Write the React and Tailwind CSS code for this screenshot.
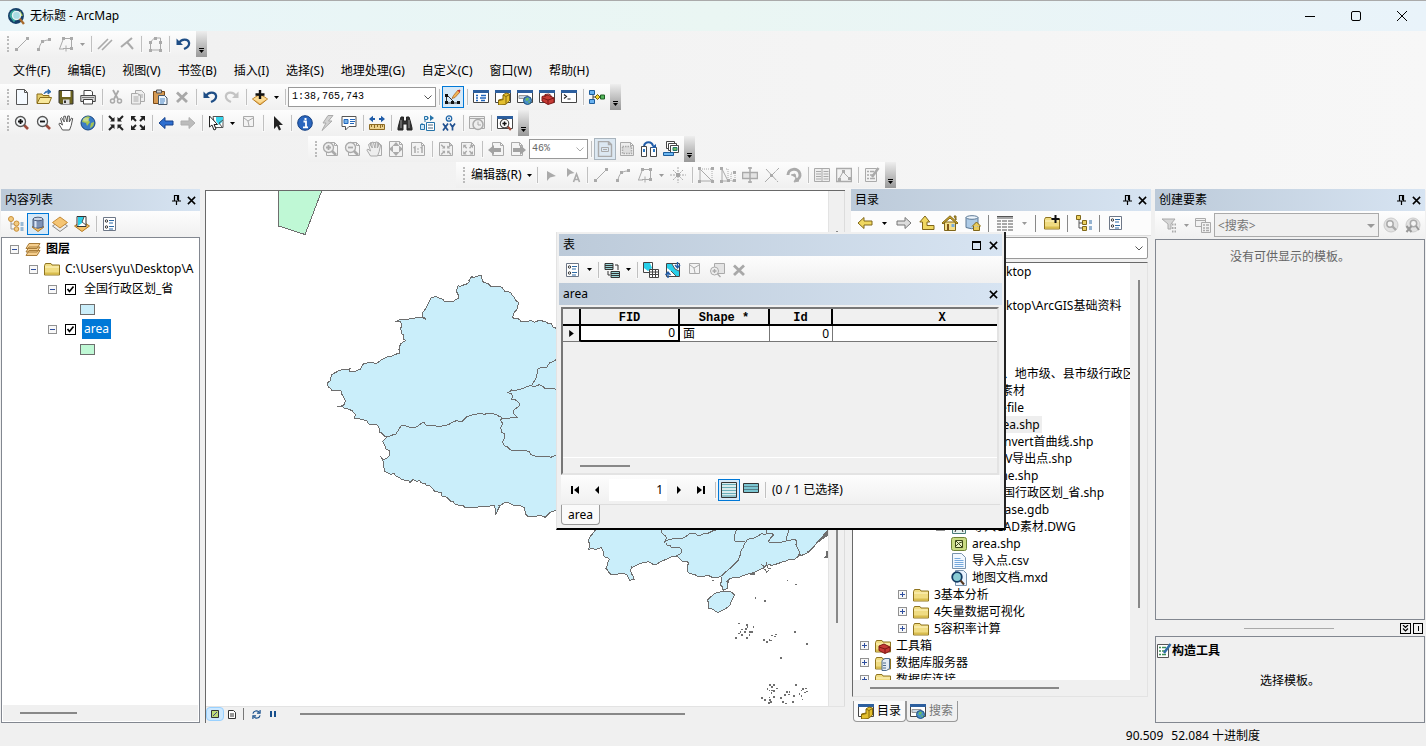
import React from "react";

const G = "#aaaaaa";
const N = "#1f4e86";
const D = "#444444";

const page = (c, f = "#f4f4f4") => <path d="M2.5 1.5h8l3 3v10h-11zM10.5 1.5v3h3" fill={f} stroke={c} />;
const lens = (c, f, handle, plus) => (
  <>
    <path d="M9.5 9.5l4.500 4.500" stroke={handle} strokeWidth="2.600" />
    <circle cx="6.500" cy="6.500" r="5" fill={f} stroke={c} strokeWidth="1.300" />
    <path d={plus ? "M4 6.500h5M6.500 4v5" : "M4 6.500h5"} stroke={c === G ? G : "#111"} strokeWidth="1.800" />
  </>
);
const win = (
  <>
    <path d="M.5 1.500h15v12h-15z" fill="#fff" stroke={D} />
    <path d="M0 1h16v3H0z" fill="#2d5f9e" />
  </>
);
const folder = (
  <>
    <path d="M.5 14V4.500l1-2h5.500l1 1.500h7.500V14z" fill="#f0dc82" stroke="#8f7420" />
    <path d="M1 6h14" stroke="#fff5c4" />
    <path d="M1 11.500h14v2H1z" fill="#d9bd4e" />
  </>
);
const grayHand = (c, f) => (
  <path d="M4.500 15L.8 9l1-1 2.700 2L2.500 3.500l1-1L6.300 7 5.600 1.500 7.200 1 9 7l.7-6 1.600 0v6L13.500 3l1.200.6-1.500 7-1.700 4.400z" fill={f} stroke={c} strokeLinejoin="round" />
);
const undo = (c, flip) => (
  <g transform={flip ? "translate(16 0) scale(-1 1)" : undefined}>
    <path d="M4 7c2.500-4.500 9-4.500 10-.5.600 3-1.500 5-5 6.500" fill="none" stroke={c} strokeWidth="2.200" />
    <path d="M1.500 2.500v6.500h6.500z" fill={c} />
  </g>
);
const arrowH = (c, e, flip) => (
  <g transform={flip ? "translate(16 0) scale(-1 1)" : undefined}>
    <path d="M1 8l6-5.500v3.500h8v4H7v3.500z" fill={c} stroke={e} />
  </g>
);
const inward = (c) => (
  <>
    <path d="M1 1l4 4M15 1l-4 4M1 15l4-4M15 15l-4-4" stroke={c} strokeWidth="2" />
    <path d="M6.500 2v4.500H2zM9.500 2v4.500H14zM6.500 14V9.500H2zM9.500 14V9.500H14z" fill={c} />
  </>
);
const outward = (c) => (
  <>
    <path d="M6 6L2.500 2.500M10 6l3.500-3.500M6 10l-3.500 3.500M10 10l3.500 3.500" stroke={c} strokeWidth="2" />
    <path d="M1 1h5L1 6zM15 1h-5l5 5zM1 15h5l-5-5zM15 15h-5l5-5z" fill={c} />
  </>
);
const box = (x, y, c = G, s = 3) => <rect x={x} y={y} width={s} height={s} fill={c} />;

const ICONS = {
  线段: <><path d="M3 13L13 3" stroke={G} />{box(1, 12)}{box(12, 1)}</>,
  弧段: <><path d="M3 13C4 7 7 4 13 4" stroke={G} fill="none" />{box(1, 12)}{box(5, 4)}{box(12, 2)}</>,
  草图: <><path d="M1.500 13L5.500 2.500h8v10h-3" stroke={G} fill="none" /><path d="M1 13h5M8 9.500v6M5 12.500h6" stroke={G} />{box(4, 1)}{box(12, 1)}{box(12, 11)}</>,
  平行: <path d="M1 13L11 3M5 14L15 4" stroke={G} strokeWidth="1.600" />,
  垂直: <path d="M2 11L13 2M8 6l6 7" stroke={G} strokeWidth="2" />,
  完成草图: <><path d="M3.500 14V6l4-4h6v12z" stroke={G} fill="none" />{box(2, 5)}{box(12, 5)}{box(2, 13)}{box(12, 13)}{box(7, 1)}</>,
  撤销: undo(N),
  恢复: undo("#c4c4c4", true),
  新建: <path d="M2.500.5h8l3 3v12h-11zM10.500.5v3h3" fill="#f5faff" stroke="#555" />,
  打开: <><path d="M1 14V5h5l1 1.500h6V14z" fill="#e6cf6c" stroke="#8a6d1a" /><path d="M1 14.500L4 8.500h11.500L13 14.500z" fill="#f7e89c" stroke="#8a6d1a" /><path d="M8 5c1-3 3-3 5-2.500M12 .5l3 2.200-3 2.300z" fill="#2d6cae" stroke="#2d6cae" /></>,
  保存: <><path d="M1 1.500h14v13.500H2.500L1 13.500z" fill="#6d641f" stroke="#333" /><path d="M4 2h8.500v6H4z" fill="#fff" /><path d="M5 10.500h6.500V15H5z" fill="#ddd" /><path d="M6 11.500h2V14H6z" fill="#333" /></>,
  打印: <><path d="M4 6V1.500h7l1.500 1.500V6" fill="#fff" stroke="#444" /><path d="M.8 6.500h14.500v6H.8z" fill="#d8d8d8" stroke="#444" /><path d="M3.500 10.500h9v4.500h-9z" fill="#fff" stroke="#444" /><path d="M2 8.500h12" stroke="#777" /></>,
  剪切: <><path d="M5 1l5 9M10.500 1.500L6 10" stroke={G} strokeWidth="1.800" /><circle cx="4.500" cy="12" r="2" fill="none" stroke={G} strokeWidth="1.500" /><circle cx="11.500" cy="12" r="2" fill="none" stroke={G} strokeWidth="1.500" /></>,
  复制: <><path d="M5.500 1.500h6l3 3v8h-9z" fill="#eee" stroke={G} /><path d="M1.500 4.500h6l3 2v8.500h-9z" fill="#eee" stroke={G} /><path d="M3.500 8h5M3.500 10h5M3.500 12h5M8 6h5M11 8h2" stroke={G} /></>,
  粘贴: <><path d="M1.500 2.500h11v12h-11z" fill="#d69a52" stroke="#7a4a18" /><path d="M4.500 1h5v3h-5z" fill="#ccc" stroke="#555" /><path d="M6.500 6.500h6l2.500 2.500v6.500H6.500z" fill="#eef5fc" stroke="#456" /><path d="M8 10h5M8 12h5M8 14h4" stroke="#4a86c5" /></>,
  删除: <path d="M3 3.500l10 9.500M13 3.500L3 13" stroke="#a8a8a8" strokeWidth="2.800" />,
  添加数据: <><path d="M8 5L15.500 10 8 16 .5 10z" fill="#f0b95c" stroke="#b57a22" /><path d="M1 10l7-4 7 4-7 4z" fill="#fbdb95" /><path d="M8 1v9M3.500 5.500h9" stroke="#111" strokeWidth="2.400" /></>,
  编辑器工具条: <><path d="M1.500 6v8M2 14h12M2 6l6 6" stroke="#333" fill="none" />{box(0, 12, "#111", 3)}{box(6, 12, "#111", 3)}{box(12, 12, "#111", 3)}{box(0, 5, "#111", 3)}<path d="M7 9.500l1.500-3L13 1l2 2-5 5.500z" fill="#f2b554" stroke="#a15c20" strokeWidth=".7" /><path d="M12.500 1.500l2 2 1-2-1-1z" fill="#c43636" /></>,
  内容列表: <>{win}<path d="M3 6.500h2M3 9h2M3 11.500h2M8 6.500h5M7 9h6M8 11.500h4" stroke="#2266bb" strokeWidth="1.300" /></>,
  目录窗口: <>{win}<path d="M8 6l3-2 3.500 1v7l-4 3.500L3.500 16v-5l4.500-1z" fill="#e3bf2e" stroke="#87690a" /><path d="M11 7.500l3.500-2M11 7.500v7.500M4 11.500l4.500-1M8 6l3 1.500" stroke="#87690a" /></>,
  搜索窗口: <>{win}<path d="M2 6.500h9v3H2z" fill="#ccd8e2" stroke="#999" /><circle cx="10.500" cy="11.500" r="4" fill="#4a90c9" stroke="#1d4f80" /><path d="M8.500 10q2-2 3.500-.5l-1 2-2 .5zM11 12l2.500 1-1.500 1.500z" fill="#6cbd59" /></>,
  工具箱窗口: <>{win}<path d="M3 7.500L9 6l6 3v4.500L9 15.500 3 12z" fill="#c53a35" stroke="#7d1715" /><path d="M6 8V5.500l4-.5 2 1.500V8M3.500 9L9 11l6-2M9 11v4" fill="none" stroke="#7d1715" /></>,
  Python窗口: <>{win}<path d="M3 5.500l2.500 2L3 9.500M6.500 10h3" fill="none" stroke="#222" strokeWidth="1.200" /></>,
  模型构建器: <><path d="M4 4v9M4 8h8" stroke="#444" fill="none" /><path d="M.5 1.500h5v4h-5zM.5 10.500h5v4h-5z" fill="#69b2f0" stroke="#1d5d9c" /><path d="M6 8l2.500-2.500L11 8l-2.500 2.500z" fill="#f5d32a" stroke="#6d5a0d" /><path d="M11.500 6h4v4h-4z" fill="#53b65a" stroke="#205f25" /></>,
  放大: lens("#555", "#f3f6f8", "#9c4b3c", true),
  缩小: lens("#555", "#f3f6f8", "#9c4b3c", false),
  平移: grayHand("#555", "#fff"),
  全图: <><circle cx="8" cy="8" r="7" fill="#3a7cc6" stroke="#17457f" /><path d="M3 4q4-4 7-2l-2 3 2 2-3 4-1-3-4-1zM11 8l3-1q0 5-4 6z" fill="#a6c552" /><ellipse cx="6" cy="4.500" rx="3" ry="2" fill="#fff" opacity=".35" /></>,
  固定比例放大: inward("#222"),
  固定比例缩小: outward("#222"),
  返回: arrowH("#2e6fd0", "#16428c"),
  前进: arrowH("#bcbcbc", "#b0b0b0", true),
  选择要素: <><path d="M5 1.500h10v11H7z" fill="#fff" stroke="#555" /><path d="M8 2h7v4l-4 4-3-4z" fill="#35d4ec" /><path d="M15 5l-4 3 3 4" stroke="#555" fill="none" /><path d="M1.500 1v11l2.500-2 2 5 2-1-2-4.500h3.500z" fill="#fff" stroke="#222" /></>,
  清除选择: <><path d="M2.500 1.500h10v10h-10z" fill="#f3f3f3" stroke={G} /><path d="M3 3l4 3 1 5M7 6l5-3" stroke={G} fill="none" /></>,
  选择元素: <path d="M5 1v13l3-3 2 4.500 2-1-2-4.500h4z" fill="#222" />,
  识别: <><circle cx="8" cy="8" r="7.300" fill="#2a66be" stroke="#143f80" /><path d="M6.500 6.500H9v5.500M6 12.300h5" stroke="#fff" strokeWidth="1.800" fill="none" /><path d="M7.500 3h2v2h-2z" fill="#fff" /></>,
  超链接: <path d="M9 .5L4 8h3l-4 7.500L13 6H9.500L14 .5z" fill="#d2d2d2" stroke={G} />,
  HTML弹出: <><path d="M1 1.500h14v10H8L4.500 15v-3.500H1z" fill="#fff" stroke="#555" /><path d="M3 4.500h4v4H3z" fill="#78b4e8" stroke="#2266bb" /><path d="M9 4.500h5M9 6.500h5M9 8.500h4" stroke="#2266bb" /></>,
  测量: <><path d="M.5 9.500h15v5H.5z" fill="#ecd18c" stroke="#8d6a23" /><path d="M2.500 10v2M5.500 10v3M8.500 10v2M11.500 10v3M13.500 10v2" stroke="#8d6a23" /><path d="M0 4l4-3.200v2.200h2v2H4v2.200zM16 4l-4-3.200v2.200h-2v2h2v2.200z" fill="#205ca8" /></>,
  查找: <><path d="M4 2h2.500v4h3V2H12l1.500 5 1.500 6v2h-5V9H6v6H1v-2l1.500-6z" fill="#333" stroke="#222" /><path d="M4 5v8M12 5v8" stroke="#999" /></>,
  查找路径: <><path d="M7.500 7.500h8v8h-8z" fill="#fff" stroke="#2673a8" /><path d="M9 10h5M9 13h5" stroke="#8a9aa8" strokeWidth="1.500" /><path d="M3 10V8M8 3h4M6 5v2" stroke="#2673a8" strokeDasharray="2 1" /><path d="M11 0l4 3-4 3z" fill="#2673a8" /><path d="M1.500 9.500h4v5h-4zM5.500 1.500h3v3h-3z" fill="#cfe6f7" stroke="#2673a8" /></>,
  转到XY: <><circle cx="8" cy="3.500" r="2.700" fill="#fff" stroke="#2066a8" strokeWidth="1.300" /><circle cx="8" cy="3.500" r="1" fill="#2066a8" /><path d="M2 8.500l5 7M7 8.500l-5 7M9 8.500l2.500 3.500L14 8.500M11.500 12v3.500" stroke="#205090" strokeWidth="1.700" fill="none" /></>,
  时间滑块: <><path d="M.5 1.500h15v12H.5zM.5 3.500h15" fill="#eee" stroke={G} /><circle cx="9" cy="9.500" r="5" fill="#eee" stroke={G} strokeWidth="1.500" /><path d="M9 6.500V10h3" stroke={G} fill="none" /></>,
  查看器: <>{win}<g transform="translate(2 3) scale(.85)">{lens("#444", "#fff", "#9c4b3c", true)}</g></>,
  页面放大: <><g transform="translate(2 0)">{page(G)}</g>{lens(G, "#eee", G, true)}</>,
  页面缩小: <><g transform="translate(2 0)">{page(G)}</g>{lens(G, "#eee", G, false)}</>,
  页面平移: <><g transform="translate(2 0)">{page(G)}</g>{grayHand(G, "#eee")}</>,
  页面全图: <><path d="M1.500.5h10l3 3v12h-13zM11.500.5v3h3" fill="#f2f2f2" stroke={G} /><path d="M8 1l3.500 4h-7zM8 15l3.500-4h-7zM1 8l4-3.500v7zM15 8l-4-3.500v7z" fill={G} /></>,
  实际大小: <><path d="M1.500 1.500h10l3 3v10h-13zM11.500 1.500v3h3" fill="#f2f2f2" stroke={G} /><path d="M3.500 7L5 6v6M10.500 7L12 6v6" stroke={G} fill="none" strokeWidth="1.500" /><path d="M7 7.500h2v1H7zM7 10.500h2v1H7z" fill={G} /></>,
  页面缩入: <><path d="M1.500 1.500h10l3 3v10h-13zM11.500 1.500v3h3" fill="#f2f2f2" stroke={G} /><g transform="translate(2.500 3) scale(.7)">{inward(G)}</g></>,
  页面缩出: <><path d="M1.500 1.500h10l3 3v10h-13zM11.500 1.500v3h3" fill="#f2f2f2" stroke={G} /><g transform="translate(2.500 3) scale(.7)">{outward(G)}</g></>,
  上一页面: <><g transform="translate(2 0)">{page(G)}</g><path d="M0 9l6-5v3h7v4H6v3z" fill="#a2a2a2" /></>,
  下一页面: <><g transform="translate(-1 0)">{page(G)}</g><path d="M16 9l-6-5v3H3v4h7v3z" fill="#a2a2a2" /></>,
  切换草稿: <><path d="M1.500.5h10l3 3v12h-13zM11.500.5v3h3" fill="none" stroke={G} strokeWidth="1.400" /><path d="M4.500 6.500h7v4h-7zM6 8.500h4" fill="none" stroke={G} /></>,
  焦点数据框: <><path d="M1.500 1.500h10l3 3v10h-13zM11.500 1.500v3h3" fill="#eee" stroke={G} /><path d="M3.500 5.500h9v7h-9z" stroke={G} strokeWidth="1.500" strokeDasharray="1.500 1" fill="#ddd" /></>,
  更改布局: <><path d="M.5 5.500h5v10h-5zM9.500 6.500h6v9h-6z" fill="#fff" stroke="#444" /><path d="M2 8h2v3H2zM12 8h2v3h-2z" fill="#2d7ac2" /><path d="M3 5C4 0 11 0 12 5" stroke="#205ca8" strokeWidth="2" fill="none" /><path d="M15 3v4H9.500z" fill="#205ca8" /></>,
  数据驱动: <><path d="M3.500.5h8v7h-8z" fill="#fff" stroke="#444" /><path d="M5.500 2.500h8v7h-8z" fill="#fff" stroke="#444" /><path d="M7.500 4.500h8v7h-8z" fill="#fff" stroke="#444" /><path d="M10 6.500h4v3h-4z" fill="#71bd62" stroke="#276" /><path d="M.5 11.500h10v3H.5z" fill="#6db7f0" stroke="#1d5d9c" /></>,
  编辑工具: <path d="M4 4v10l3-3.500 6-1.500z" fill={G} />,
  注记编辑: <><path d="M2 1v9l3-3 4.500-1z" fill={G} /><path d="M8.500 15l3-8 3 8M9.500 12.500h4" stroke={G} fill="none" strokeWidth="1.600" /></>,
  点: <><path d="M8 0v16M0 8h16M3 3l10 10M13 3L3 13" stroke={G} strokeDasharray="2 1" />{box(6, 6, "#a5a5a5", 4)}</>,
  编辑折点: <><path d="M2 2v12h12L2 2" stroke={G} fill="none" /><path d="M2 2h12v12" stroke={G} strokeDasharray="1 1" />{box(0, 0)}{box(0, 13)}{box(13, 0)}{box(13, 13)}</>,
  整形: <><path d="M2 2v12h6z" stroke={G} fill="none" /><path d="M6 2h2v12M11 6h4v8h-4z" stroke={G} strokeDasharray="1 1" />{box(0, 0)}{box(0, 13)}{box(7, 12)}{box(13, 4)}{box(13, 12)}</>,
  裁剪面: <><path d="M.5 5.500h15v6H.5z" stroke={G} fill="#e4e4e4" strokeWidth="1.500" /><path d="M8 0v16M6 1h4M6 15h4" stroke={G} strokeWidth="1.500" /></>,
  分割: <><path d="M1 15L15 1M2 2l12 13" stroke={G} strokeDasharray="7 1" />{box(6, 7)}</>,
  旋转: <><path d="M2 8a6 5.500 0 1 1 8 5" stroke={G} strokeWidth="3" fill="none" /><path d="M5 8l4-1 1 4M10 11l-2 4 5-1z" fill={G} stroke={G} /></>,
  属性: <><path d="M.5 1.500h15v13H.5zM8 2v12M2 4.500h5M2 7h5M2 9.500h5M2 12h5M9.500 4.500h5M9.500 7h5M9.500 9.500h5M9.500 12h5" stroke={G} fill="#eee" /></>,
  草图属性: <><path d="M.5 1.500h15v13H.5z" stroke={G} fill="#f3f3f3" strokeWidth="1.500" /><path d="M3 12l4-7 6 6" stroke={G} fill="none" />{box(2, 11)}{box(6, 3)}{box(12, 10)}</>,
  创建要素: <><path d="M1.500 1.500h11v13h-11z" stroke={G} fill="#f3f3f3" /><path d="M3 4.500h2M3 8h2M3 11.500h2M6 4.500h4M6 8h3M6 11.500h5" stroke={G} strokeWidth="1.500" /><path d="M8 10l6.500-9" stroke={G} strokeWidth="2.500" /></>,
  按绘制顺序: <><path d="M3 5v8h8M3 8h5" stroke="#999" fill="none" /><circle cx="3" cy="3" r="2.500" fill="#f2ca80" stroke="#c98f38" /><circle cx="8.500" cy="7.500" r="2.500" fill="#f2ca80" stroke="#c98f38" /><circle cx="8.500" cy="13" r="2.300" fill="#f2ca80" stroke="#c98f38" /><path d="M12.500 7h3M12.500 9h3M12.500 12h3M12.500 14h3" stroke="#3c7fb5" /></>,
  按源: <><path d="M4 10h8l2 1-6 4.500L2 11z" fill="#f4c168" stroke="#b57a22" /><path d="M3 3v8q5 2.500 10 0V3z" fill="#7d92b5" stroke="#50607e" /><path d="M5.500 4v7.500" stroke="#dbe6f6" strokeWidth="2" /><ellipse cx="8" cy="3" rx="5" ry="1.800" fill="#cad5e6" stroke="#50607e" /></>,
  按可见性: <><path d="M8 5l7.500 5L8 15.500.5 10z" fill="#eee" stroke="#888" /><path d="M8 1l7.500 5.500L8 12 .5 6.500z" fill="#f5c574" stroke="#c58a36" /></>,
  按选择: <><path d="M8 5l7.500 5L8 15.500.5 10z" fill="#f4c168" stroke="#b57a22" /><path d="M3 .5h9v10H3z" fill="#fff" stroke="#333" /><path d="M4 1h6l-2 6-4 3z" fill="#28cfe9" /><path d="M10 1L8 6l4 3" stroke="#555" fill="none" /></>,
  选项: <><path d="M1.500 1.500h12v13h-12z" fill="#fff" stroke="#6d7787" /><path d="M7 4.500h5M7 7h4M7 10.500h5M7 13h4" stroke="#2e6aa5" /><circle cx="4.500" cy="5" r="1.200" fill="none" stroke="#333" /><circle cx="4.500" cy="11" r="1.200" fill="none" stroke="#333" /></>,
  图层组: <path d="M4 9.500h11l-3 5H1zM4 6h11l-3 5H1zM4 2.500h11l-3 5H1z" fill="#f5ce8d" stroke="#a87c39" />,
  文件夹: folder,
  上一级: <path d="M6 1L.8 7h2.700v7.500H15v-4H8V7h2.700z" fill="#f0d860" stroke="#806618" />,
  后退: arrowH("#f0d860", "#806618"),
  向前: arrowH("#ddd", "#777", true),
  主目录: <><path d="M2.500 7v8.500h11V7z" fill="#f4df8c" stroke="#806618" /><path d="M0 8L8 .800 16 8l-1 1-7-6-7 6zM12 1h2v4z" fill="#cfa92c" stroke="#806618" /><path d="M5 9h2v6H5z" fill="#80571a" /><path d="M9.500 9h3v3h-3z" fill="#77aadd" /></>,
  默认库: <><path d="M1 2.500v10q5.500 2.500 12 0V2.500z" fill="#aecbe6" stroke="#5c7894" /><ellipse cx="7" cy="2.500" rx="6" ry="1.800" fill="#edf5fc" stroke="#5c7894" /><path d="M8.500 11v4.500h6V11M7 11.500L11.500 7l4.500 4.500" fill="#eacb58" stroke="#806618" /></>,
  视图: <path d="M0 1.500h16M0 3h16M0 6h4M5 6h5M11 6h5M0 9h4M5 9h5M11 9h5M0 12h4M5 12h5M11 12h5M0 15h4M5 15h5M11 15h5" stroke="#555" strokeWidth="1.200" />,
  连接文件夹: <>{folder}<path d="M11.500 0v8M7.500 4h8" stroke="#111" strokeWidth="2" /></>,
  目录树: <><path d="M3 3v10h6M3 8h6" stroke="#555" fill="none" /><path d="M.5.500h4v4h-4zM6.500 5.500h4v4h-4zM6.500 11.500h4v4h-4z" fill="#ecd060" stroke="#80691a" /><path d="M13 6h3M13 8h3M13 12h3M13 14h3" stroke="#2e6aa5" /></>,
  关联表: <><path d="M1 1.500h8v6H1zM7 9.500h8.500v6H7z" fill="#9bd6d8" stroke="#333" /><path d="M1 3.500h8M1 5.500h8M7 11.500h8M7 13.500h8M11 3h3v5M4 9v4h2" stroke="#333" fill="none" /></>,
  按属性选择: <><path d="M.5.500h9v10h-9z" fill="#fff" stroke="#444" /><path d="M1 1h6l2 5-4 3-4-3z" fill="#28cfe9" /><path d="M6.500 7.500h9v8h-9zM6.500 10h9M6.500 12.500h9M9.500 8v7M12.500 8v7" fill="#fff" stroke="#444" /></>,
  切换选择: <><path d="M1.500 1.500h13v13h-13z" fill="#fff" stroke="#444" /><path d="M2 2h5l3 5 4 2v5h-3L6 9 2 6z" fill="#28cfe9" /><path d="M7 2l3 5 4 2M6 9l5 5" stroke="#555" /><path d="M3 16v-5M.5 13L3 10l2.500 3M12.500 0v5M10 3l2.500 3L15 3" stroke="#205ca8" strokeWidth="1.400" fill="none" /></>,
  缩放至所选: <><path d="M5.500 1.500h10v10h-10z" fill="#e4e4e4" stroke={G} /><circle cx="5.500" cy="9" r="4" fill="#eee" stroke={G} /><path d="M3.500 9h4M5.500 7v4M8.500 12l3 3" stroke={G} strokeWidth="1.400" /></>,
  筛选: <><path d="M0 2h13L9 7v5H6V7z" fill="#d6d6d6" stroke={G} /><path d="M10 7.500h5M10 11h5M10 14.500h5" stroke={G} strokeWidth="2" strokeDasharray="1.500 1" /></>,
  组织模板: <><path d="M.5 1.500h10v8H.5zM.5 3.500h10" fill="#f2f2f2" stroke={G} /><path d="M6.500 5.500h9v10h-9z" fill="#f2f2f2" stroke={G} /><path d="M8 8h2M8 11h2M8 13.500h2M11 8h3M11 11h3M11 13.500h3" stroke={G} strokeWidth="1.500" /></>,
  搜索: <><circle cx="8" cy="8" r="7" fill="#e2e2e2" stroke="#ccc" /><circle cx="7" cy="7" r="3.200" fill="#f5f5f5" stroke={G} strokeWidth="1.500" /><path d="M9.500 9.500l3.500 3.500" stroke={G} strokeWidth="2.400" /></>,
  清除: <><circle cx="8" cy="8" r="7" fill="#e2e2e2" stroke="#ccc" /><circle cx="8.500" cy="6.500" r="3.200" fill="#f5f5f5" stroke={G} strokeWidth="1.500" /><path d="M11 9l3 4M1.500 9l5 6M6.500 9l-5 6" stroke="#999" strokeWidth="2" /></>,
  所有记录: <><path d="M.5.5h15v15H.5z" fill="#fff" stroke="#333" /><path d="M1 2.500h14M1 5.500h14M1 8.500h14M1 11.500h14M1 14h14" stroke="#69aeb9" strokeWidth="1.500" /></>,
  所选记录: <><path d="M.5 1.500h15v9H.5z" fill="#7cc6d2" stroke="#333" /><path d="M1 4.500h14M1 7.500h14" stroke="#55808a" /></>,
  工具箱: <>{folder}<path d="M4 8l5-2 6 3v4l-5 2.500L4 12.500z" fill="#c53a35" stroke="#7d1715" /><path d="M4 9l6 2 5-2M10 11v4" stroke="#7d1715" fill="none" /></>,
  服务器: <>{folder}<path d="M7 5.500l3-2h4.500v10l-3 2H7z" fill="#e3ebf3" stroke="#4e6c8c" /><path d="M8 8h3M8 10.500h3M8 13h3" stroke="#4e6c8c" /></>,
  要素类: <><rect x=".5" y="1.500" width="15" height="13" rx="2" fill="#cbdc84" stroke="#6f8434" /><path d="M4.500 4.500h7v7h-7zM5 5l6 6M5 10l3-3 3-1" fill="#eef4c6" stroke="#3b4717" /></>,
  文本: <><path d="M1.500.5h9l4 4v11h-13z" fill="#f2f8ff" stroke="#7993ad" /><path d="M3.500 5.500h6M3.500 7.500h9M3.500 9.500h9M3.500 11.500h9M3.500 13.500h9" stroke="#76a9dc" /></>,
  地图文档: <><path d="M4.500.5h8l3 3v12h-11z" fill="#e8f3ff" stroke="#7993ad" /><circle cx="6" cy="7" r="4.800" fill="#89ccd5" stroke="#123b63" strokeWidth="1.800" /><path d="M9.500 10.500l3.500 4" stroke="#553820" strokeWidth="2" /></>,
  CAD: <><path d="M1.500 1.500h13v13h-13z" fill="#e8f3ef" stroke="#497b77" /><path d="M4 13L8 3l4 10M4 3l8 8" stroke="#333" fill="none" /></>,
  应用: <><circle cx="7.500" cy="7.500" r="7.500" fill="#163f69" /><path d="M1.500 8q0-6 6-6.500l-2 5 2 5-2 2z" fill="#3aa69c" /><path d="M11 2l3 5-2 1z" fill="#b6cf5a" /><circle cx="8" cy="7" r="3.800" fill="#a9dde3" stroke="#e6f2f4" strokeWidth="1.300" /><path d="M11 10l4 5" stroke="#a8692b" strokeWidth="2.200" /></>,
};

function Icon({ name, className = "size-4" }) {
  return <svg viewBox="0 0 16 16" fill="none" aria-hidden="true" className={className + " shrink-0"}>{ICONS[name]}</svg>;
}

function Caret({ off }) {
  return <svg viewBox="0 0 5 3" aria-hidden="true" className="h-[3px] w-[5px] shrink-0"><path d="M0 0h5L2.500 3z" fill={off ? "#999" : "#000"} /></svg>;
}

const Sep = () => <span className="mx-[2px] h-4 w-px shrink-0 bg-[#c0c0c0] ring-1 ring-[#f8f8f8]" />;

function Drop({ off }) {
  return <button aria-label="更多" className="flex h-6 w-[11px] shrink-0 items-center justify-center"><Caret off={off} /></button>;
}

function Tool({ name, on }) {
  return (
    <button aria-label={name} className={"flex h-[22px] w-[22px] shrink-0 items-center justify-center " + (on ? "border border-[#0078d7] bg-[#d6e9f8]" : "")}>
      <Icon name={name} />
    </button>
  );
}

function Tools({ items }) {
  return items.split(" ").map((t, i) => {
    if (t === "|") return <span key={i} className="flex w-[6px] shrink-0 justify-center"><Sep /></span>;
    if (t === "v" || t === "w") return <Drop key={i} off={t === "w"} />;
    return t[0] === "*" ? <Tool key={i} name={t.slice(1)} on /> : <Tool key={i} name={t} />;
  });
}

function Bar({ className = "", children }) {
  return (
    <div role="toolbar" className={"flex h-[26px] w-max shrink-0 items-stretch " + className}>
      <div className="flex items-center bg-linear-to-b from-[#fdfdfd] to-[#f0f0f0] pr-[2px]">
        <span className="mr-[2px] ml-[7px] h-4 w-[2px] border-l-2 border-dotted border-[#bbb]" />
        {children}
      </div>
      <button aria-label="工具条选项" className="flex w-[11px] flex-col items-center justify-end gap-px bg-linear-to-b from-[#eee] to-[#999] pb-1">
        <span className="h-px w-[5px] bg-black" />
        <Caret />
      </button>
    </div>
  );
}

const X = () => <svg viewBox="0 0 10 10" className="size-[9px]" aria-hidden="true"><path d="M1 1l8 8M9 1L1 9" stroke="#000" strokeWidth="1.700" /></svg>;

function Header({ title, pin = true, max }) {
  return (
    <div className="flex h-[22px] shrink-0 items-center bg-linear-to-r from-[#bccad9] to-[#d7e4f2] pr-[4px] pl-1">
      <h2 className="flex-1">{title}</h2>
      {pin && <button aria-label="自动隐藏" className="mr-[6px]"><svg viewBox="0 0 9 10" className="h-[10px] w-[9px]"><path d="M2.500 5.500v-5h4v5M5.500 1v4M0 6h9M4.500 6v4" fill="none" stroke="#000" strokeWidth="1.200" /></svg></button>}
      {max && <button aria-label="最大化" className="mr-2 h-[9px] w-[9px] border border-t-2 border-black" />}
      <button aria-label="关闭"><X /></button>
    </div>
  );
}

function Expander({ plus }) {
  return (
    <button aria-label={plus ? "展开" : "折叠"} className="flex size-[9px] shrink-0 items-center justify-center border border-[#919191] bg-[#f8f8f8]">
      <svg viewBox="0 0 5 5" className="size-[5px]" shapeRendering="crispEdges"><path d={plus ? "M0 2h5v1H0zM2 0h1v5H2z" : "M0 2h5v1H0z"} fill="#2f4f9f" /></svg>
    </button>
  );
}

/* Splits each segment into short steps with a small repeatable offset, as on a surveyed boundary. */
function rough(text, step = 7, amp = 7, close = false) {
  const pts = text.split(" ").map((p) => p.split(",").map(Number));
  if (close) pts.push(pts[0]);
  let k = 0;
  const out = [];
  for (let i = 0; i < pts.length - 1; i++) {
    const [ax, ay] = pts[i];
    const [bx, by] = pts[i + 1];
    const n = Math.max(1, Math.round(Math.hypot(bx - ax, by - ay) / step));
    for (let j = 0; j < n; j++) {
      const r = j ? Math.sin(++k * 12.9898 + ax) * amp * 0.6 : 0;
      out.push(`${Math.round(ax + ((bx - ax) * j) / n + r)},${Math.round(ay + ((by - ay) * j) / n - r)}`);
    }
  }
  out.push(pts[pts.length - 1].join(","));
  return "M" + out.join("L");
}

const WEST = "720,205 695,192 676,184 655,182 640,184 600,179 583,176 581,160 590,150 592,125 585,118 572,98 550,88 522,80 495,68 486,46 455,50 448,66 435,73 415,76 413,100 416,115 400,124 370,119 333,113 323,135 308,158 317,178 288,173 262,179 230,184 245,193 250,225 257,241 243,250 240,279 205,290 165,312 130,312 120,330 95,336 90,326 65,330 35,345 33,362 23,368 35,392 65,394 73,434 52,440 80,445 100,458 104,475 145,490 170,494 177,518 200,530 188,545 205,570 210,585 200,596 182,588 190,620 202,638 222,640 240,654 270,668 280,658 300,662 320,678 345,694 365,698 375,710 400,724 430,736 470,742 517,735 527,762 537,737 552,729 580,735 605,740 615,752 628,771 675,772 690,758 720,745";
const WEST_LINES = [
  "200,530 228,522 245,496 290,500 312,486 335,496 372,496 400,485 425,486 440,470 500,461 545,472 592,472 582,450 600,438 575,418 575,402 563,398 575,390 635,378 658,374 672,382 698,385 710,402",
  "545,472 549,490 542,505 552,520 548,545 565,562 630,580 692,592 712,586",
  "635,376 648,350 653,328 680,324 690,308 712,296",
];
const SOUTH = "88,0 60,35 55,50 55,74 70,70 95,68 100,90 118,102 108,130 135,150 165,147 175,160 192,163 185,125 205,118 225,112 260,118 290,103 315,95 350,110 352,135 375,148 410,152 450,155 450,180 458,192 472,190 470,170 480,160 540,145 600,118 645,110 670,105 690,90 715,82 740,55 775,20 775,0";
const SOUTH_LINES = [
  "275,14 288,35 282,52 300,45 332,42 360,25 390,32 420,22 440,14",
  "288,55 300,62 333,72 333,85 315,95",
  "450,155 480,130 505,105 510,85 522,60 530,45 555,38 575,25 610,30 595,50 640,50 680,48 690,90",
  "499,12 493,40 510,50 524,48",
  "655,12 648,45",
  "585,12 590,28",
];
const HAINAN = "480,198 493,210 480,240 460,255 443,262 417,250 412,225 435,205";
const ISLETS = "428,166 652,166 678,178 556,218 584,227 506,295 530,300 532,306 550,306 516,313 528,311 511,321 524,320 540,320 546,321 506,325 516,330 538,330 530,338 497,338 606,331 617,328 614,334 598,344 602,346 582,345 590,350 675,320 710,357 632,398 600,479 611,479 606,486 592,492 598,496 606,496 612,498 604,504 620,490 598,517 576,518 584,525 600,524 611,515 597,534 602,531 632,518 645,510 650,500 656,508 658,500 638,530 648,535 668,530 672,513 677,479 688,506 694,496 698,492 704,502 708,490 711,499 694,512 697,523".split(" ").map((p) => p.split(",").map(Number));

function MapView() {
  const line = { fill: "none", vectorEffect: "non-scaling-stroke" };
  return (
    <svg viewBox="206 191 623 515" width="623" height="515" role="img" aria-label="地图" className="max-w-none" shapeRendering="crispEdges" stroke="#6e6e6e" fill="#caeefa">
      <path d="M278.500 185v41l26.500 8.500L324 185z" fill="#bff8d5" />
      <g transform="translate(320 260) scale(.33333)">
        <path d={rough(WEST)} vectorEffect="non-scaling-stroke" />
        {WEST_LINES.map((l) => <path key={l} d={rough(l)} {...line} />)}
      </g>
      <g transform="translate(570 525) scale(.33333)">
        <path d={rough(SOUTH)} vectorEffect="non-scaling-stroke" />
        {SOUTH_LINES.map((l) => <path key={l} d={rough(l)} {...line} />)}
        <path d={rough(HAINAN, 8, 3, true)} vectorEffect="non-scaling-stroke" />
        <path d="M540 144h14v7h-14zM468 168l10-5v12zM700 84l15-6 25-26 33-38v18l-30 22-20 22zM768 78h7v20h-12l6-6zM684 86h10v8h-10z" fill="#6e6e6e" stroke="none" />
        <path d="M574 118l10 8 6-6 4 10 8 2M576 130l10 4 4 8 8-8M590 112v12" {...line} />
        {ISLETS.map(([x, y]) => <rect key={x + "," + y} x={x - 2} y={y - 2} width="5" height="5" fill="#6e6e6e" stroke="none" />)}
      </g>
    </svg>
  );
}

function Check({ label }) {
  return (
    <label className="relative flex size-[11px] shrink-0">
      <input type="checkbox" defaultChecked aria-label={label} className="size-[11px] appearance-none border border-black bg-white" />
      <svg viewBox="0 0 11 11" className="pointer-events-none absolute inset-0 size-[11px]"><path d="M2.500 5l2 2.500 4-5" stroke="#000" strokeWidth="1.700" fill="none" /></svg>
    </label>
  );
}

function Contents() {
  return (
    <section className="flex w-[199px] shrink-0 flex-col">
      <Header title="内容列表" />
      <div className="flex h-[26px] shrink-0 items-center bg-linear-to-b from-[#fdfdfd] to-[#f0f0f0] pl-[4px]">
        <Tools items="按绘制顺序 *按源 按可见性 按选择 | 选项" />
      </div>
      <div className="flex min-h-0 flex-1 flex-col overflow-hidden border border-[#828790] bg-white">
        <ul className="flex-1 overflow-hidden pt-px whitespace-nowrap">
          <li className="flex h-5 items-center pl-2 font-bold"><Expander /><Icon name="图层组" className="mr-[5px] ml-[6px] size-4" />图层</li>
          <li className="flex h-5 items-center pl-[27px]"><Expander /><Icon name="文件夹" className="mr-[5px] ml-[6px] size-4" />C:\Users\yu\Desktop\A</li>
          <li className="flex h-5 items-center gap-2 pl-[46px]"><Expander /><Check label="全国行政区划_省" />全国行政区划_省</li>
          <li className="flex h-5 items-center pl-[78px]"><span className="h-[11px] w-[15px] border border-[#6e6e6e] bg-[#caeefa]" /></li>
          <li className="flex h-5 items-center gap-2 pl-[46px]"><Expander /><Check label="area" /><span className="-ml-[2px] flex h-5 items-center bg-[#0078d7] px-[2px] text-white">area</span></li>
          <li className="flex h-5 items-center pl-[78px]"><span className="h-[11px] w-[15px] border border-[#6e6e6e] bg-[#bff8d5]" /></li>
        </ul>
        <div className="m-px flex h-4 items-center bg-[#f0f0f0] pl-[17px]"><span className="h-[2px] w-[57px] bg-[#888]" /></div>
      </div>
    </section>
  );
}

function MapPane() {
  return (
    <section className="mt-px flex min-w-0 flex-1 flex-col border-t border-l border-[#696969]">
      <div className="flex min-h-0 flex-1">
        <div className="min-w-0 flex-1 overflow-hidden border-r border-[#e3e3e3] bg-white"><MapView /></div>
        <div className="flex w-4 justify-center border-r border-[#dcdcdc] pt-10"><span className="h-[392px] w-[2px] bg-[#888]" /></div>
      </div>
      <div className="flex h-[17px] shrink-0 items-start border-t border-[#e3e3e3]">
        <div className="flex h-[14px] items-center">
          <button aria-label="数据视图" className="flex h-[14px] w-[18px] items-center justify-center rounded-sm border border-[#99d1ff] bg-[#cce8ff]"><svg viewBox="0 0 8 8" className="size-2"><path d="M.5.5h7v7h-7z" fill="#bddb77" stroke="#333" /><path d="M2 6l4-4" stroke="#448" /></svg></button>
          <button aria-label="布局视图" className="flex h-[14px] w-4 items-center justify-center"><svg viewBox="0 0 8 9" className="h-[9px] w-2"><path d="M.5.5h5l2 2v6h-7zM2 4h4M2 6h4" fill="#fff" stroke="#333" /></svg></button>
          <span className="mr-[4px] ml-[3px] h-3 w-px bg-[#777]" />
          <button aria-label="刷新" className="flex w-4 justify-center"><svg viewBox="0 0 10 10" className="size-[9px]"><path d="M1 4a4 4 0 0 1 7-1.500M9 0v3.500H5.500M9 6a4 4 0 0 1-7 1.500M1 10V6.500h3.500" fill="none" stroke="#174f8c" strokeWidth="1.300" /></svg></button>
          <button aria-label="暂停" className="flex w-[18px] justify-center gap-[2px]"><span className="h-[6px] w-[2px] bg-[#174f8c]" /><span className="h-[6px] w-[2px] bg-[#174f8c]" /></button>
          <span className="ml-[18px] h-[2px] w-[385px] bg-[#888]" />
        </div>
      </div>
    </section>
  );
}

const INDENT = ["pl-[7px]", "pl-[26px]", "pl-[45px]", "pl-[64px]", "pl-[83px]", "pl-[102px]"];
const TREE = [
  [1, "C:\\Users\\yu\\Desktop", "文件夹", 1],
  [1, "D:\\", "文件夹", 1],
  [1, "C:\\Users\\yu\\Desktop\\ArcGIS基础资料", "文件夹"],
  [2, "1认识软件", "文件夹", 1],
  [2, "2数据处理", "文件夹"],
  [3, "数据", "文件夹"],
  [4, "1省级、地市级、县市级行政区", "文件夹", 1],
  [3, "数据入库素材", "文件夹"],
  [4, "Shapefile", "文件夹"],
  [5, "area.shp", "要素类", 2, true],
  [5, "convert首曲线.shp", "要素类", 2],
  [5, "CSV导出点.shp", "要素类", 2],
  [5, "Line.shp", "要素类", 2],
  [5, "全国行政区划_省.shp", "要素类", 2],
  [4, "database.gdb", "默认库", 1],
  [4, "导入CAD素材.DWG", "CAD"],
  [4, "area.shp", "要素类", 2],
  [4, "导入点.csv", "文本", 2],
  [4, "地图文档.mxd", "地图文档", 2],
  [2, "3基本分析", "文件夹", 1],
  [2, "4矢量数据可视化", "文件夹", 1],
  [2, "5容积率计算", "文件夹", 1],
  [0, "工具箱", "工具箱", 1],
  [0, "数据库服务器", "服务器", 1],
  [0, "数据库连接", "文件夹", 1],
];

const VSep = () => <span className="mr-[4px] ml-[3px] h-[17px] w-px shrink-0 bg-[#888]" />;

function Catalog() {
  return (
    <section className="flex w-[300px] shrink-0 flex-col">
      <Header title="目录" />
      <div className="flex h-[25px] shrink-0 items-center gap-px border-b border-[#ddd] bg-[#fcfcfc] pl-[3px]">
        <Tool name="后退" />
        <span className="flex w-[15px] justify-center"><Caret /></span>
        <Tools items="向前 上一级 主目录 默认库" /><VSep /><Tool name="视图" />
        <span className="flex w-[14px] justify-center"><Caret off /></span>
        <VSep /><Tool name="连接文件夹" /><VSep /><Tool name="目录树" /><VSep /><Tool name="选项" />
      </div>
      <div className="relative mt-px mr-[3px] ml-px h-[22px] shrink-0">
        <select aria-label="位置" className="h-[22px] w-full appearance-none rounded-xs border border-[#999] bg-white pl-2 text-xs"><option>area.shp</option></select>
        <svg viewBox="0 0 8 5" className="pointer-events-none absolute top-[9px] right-[5px] h-[5px] w-2"><path d="M.5.5L4 4 7.500.5" fill="none" stroke="#555" /></svg>
      </div>
      <div className="mt-[3px] mr-[3px] ml-px flex min-h-0 flex-1 flex-col border border-[#e3e3e3] border-t-[#696969] border-l-[#696969]">
        <div className="flex min-h-0 flex-1">
          <ul className="min-w-0 flex-1 overflow-hidden bg-white whitespace-nowrap">
            {TREE.map(([lv, text, icon, kind, hi], i) => (
              <li key={i} className={"flex h-[17px] items-center " + INDENT[lv]}>
                {kind === 2 ? <span className="w-[9px] shrink-0" /> : <Expander plus={kind === 1} />}
                <Icon name={icon} className="ml-[6px] size-4" />
                <span className={"ml-[3px] flex h-[17px] items-center px-[2px] " + (hi ? "bg-[#eee]" : "")}>{text}</span>
              </li>
            ))}
          </ul>
          <div className="flex w-[17px] justify-center pt-[17px]"><span className="h-[328px] w-[2px] bg-[#888]" /></div>
        </div>
        <div className="flex h-4 shrink-0 items-center pl-[17px]"><span className="h-[2px] w-[189px] bg-[#888]" /></div>
      </div>
      <div className="mt-1 flex h-[22px] shrink-0 pl-[2px]" role="tablist">
        <button role="tab" aria-selected="true" className="flex h-[21px] w-[53px] items-center gap-[3px] rounded-b border border-t-0 border-[#999] bg-[#fafafa] pl-1"><Icon name="目录窗口" />目录</button>
        <button role="tab" aria-selected="false" className="flex h-[21px] w-[52px] items-center gap-[3px] rounded-b border border-t-0 border-[#999] pl-[3px] text-[#777]"><Icon name="搜索窗口" />搜索</button>
      </div>
    </section>
  );
}

function Create() {
  return (
    <section className="flex w-[270px] shrink-0 flex-col">
      <Header title="创建要素" />
      <div className="flex h-7 shrink-0 items-center bg-linear-to-b from-[#fdfdfd] to-[#f0f0f0] pl-[4px]">
        <Tools items="筛选 w 组织模板" />
        <div className="relative mr-px min-w-0 flex-1">
          <input aria-label="搜索模板" placeholder="<搜索>" className="block h-6 w-full border border-[#aaa] bg-[#f0f0f0] px-[3px] text-xs placeholder:text-[#777]" />
          <span className="absolute top-[11px] right-[4px]"><svg viewBox="0 0 8 4" className="h-1 w-2"><path d="M0 0h8L4 4z" fill="#999" /></svg></span>
        </div>
        <Tools items="搜索 清除" />
        <span className="w-px" />
      </div>
      <div className="min-h-0 flex-1 border border-[#828790] pt-[9px] text-center text-[#666]">没有可供显示的模板。</div>
      <div className="flex h-4 shrink-0 items-center justify-end gap-[2px] pr-[2px]">
        <span className="mr-[64px] h-px w-[90px] bg-[#aaa]" />
        <button aria-label="折叠" className="flex h-[11px] w-[11px] items-center justify-center border border-black"><svg viewBox="0 0 7 7" className="size-[7px]"><path d="M1 0l2.500 2.500L6 0M1 3.500L3.500 6 6 3.500" fill="none" stroke="#000" strokeWidth="1.200" /></svg></button>
        <button aria-label="停靠" className="h-[11px] w-[10px] border border-black p-[2px]"><span className="mx-auto block h-full w-px bg-black" /></button>
      </div>
      <div className="flex h-[87px] shrink-0 flex-col border border-[#828790]">
        <h3 className="flex h-7 items-center font-bold">
          <svg viewBox="0 0 16 16" className="size-4" fill="none"><path d="M1.500 1.500h11v13h-11z" fill="#fff" stroke="#555" /><path d="M3 4.500h2M3 8h2M3 11.500h2M6 4.500h4M6 8h3M6 11.500h4" stroke="#3c8c56" strokeWidth="1.500" /><path d="M8 10l6.500-9" stroke="#316da8" strokeWidth="2.500" /></svg>构造工具
        </h3>
        <p className="mt-2 text-center">选择模板。</p>
      </div>
    </section>
  );
}

function Nav({ label, d }) {
  return <button aria-label={label} className="flex h-5 w-[22px] items-center justify-center"><svg viewBox="0 0 8 8" className="size-2"><path d={d} /></svg></button>;
}

function TableWindow() {
  const th = "border-b-2 border-black pt-[3px] text-center font-bold leading-none";
  return (
    <section aria-label="表" className="absolute top-[232px] left-[556px] flex h-[298px] w-[450px] flex-col border-r-2 border-b-2 border-l border-l-[#e3e3e3] border-r-[#222] border-b-black bg-[#f0f0f0] p-[2px]">
      <Header title="表" pin={false} max />
      <div className="flex h-[27px] shrink-0 items-center bg-linear-to-b from-[#fdfdfd] to-[#f0f0f0] pl-[3px]">
        <Tools items="选项 v | 关联表 v | 按属性选择 切换选择 清除选择 缩放至所选 删除" />
      </div>
      <Header title="area" pin={false} />
      <div className="mr-[3px] ml-[2px] mt-[2px] flex h-[168px] shrink-0 flex-col overflow-hidden border-2 border-[#e3e3e3] border-t-[#777] border-l-[#777]">
        <div className="flex-1 overflow-hidden">
          <table className="w-[488px] table-fixed border-separate border-spacing-0">
            <thead className="font-['Liberation_Mono',monospace] text-xs">
              <tr className="h-4">
                <th aria-label="行" className={th + " w-[18px] border-r-2"} /><th className={th + " w-[99px] border-r-2"}>FID</th><th className={th + " w-[90px] border-r-2"}>Shape *</th><th className={th + " w-[63px] border-r-2"}>Id</th><th className={th}>X</th>
              </tr>
            </thead>
            <tbody className="leading-none">
              <tr className="h-[16px]">
                <td className="border-r-2 border-b border-black border-b-[#777]"><svg viewBox="0 0 4 6" className="mx-auto h-[7px] w-[5px]"><path d="M0 0l4 3-4 3z" /></svg></td>
                <td className="border-r-2 border-b-2 border-black bg-white pr-[3px] text-right">0</td>
                <td className="border-r border-b border-[#777] bg-white pl-[3px]">面</td>
                <td className="border-r border-b border-[#777] bg-white pr-[3px] text-right">0</td>
                <td className="border-b border-[#777] bg-white" />
              </tr>
            </tbody>
          </table>
        </div>
        <div className="flex h-4 items-center border-t border-white pl-[17px]"><span className="h-[2px] w-[50px] bg-[#888]" /></div>
      </div>
      <div className="mx-[2px] flex h-[30px] shrink-0 items-center border-b border-[#ddd] bg-linear-to-b from-[#fdfdfd] to-[#f0f0f0] pl-[3px]">
        <Nav label="首条" d="M0 0h2v8H0zM8 0v8L3 4z" />
        <Nav label="上一条" d="M6 0v8L2 4z" />
        <input aria-label="当前记录" defaultValue="1" className="mx-px h-[22px] w-[58px] bg-white pr-[4px] text-right text-xs" />
        <Nav label="下一条" d="M2 0v8l4-4z" />
        <Nav label="末条" d="M6 0h2v8H6zM0 0v8l5-4z" />
        <Tools items="| *所有记录 所选记录 |" />
        <span className="ml-[4px]">(0 / 1 已选择)</span>
      </div>
      <div className="flex flex-1 items-start pl-[2px]">
        <button className="h-5 w-[39px] rounded-b border border-t-0 border-[#999] bg-[#fafafa]">area</button>
      </div>
    </section>
  );
}

export default function App() {
  const combo = "appearance-none border border-[#999] bg-white font-['Liberation_Mono',monospace] text-[10px]";
  return (
    <div className="relative flex h-screen min-w-[1100px] flex-col overflow-hidden bg-[#f0f0f0] font-['Noto_Sans','Noto_Sans_CJK_SC',sans-serif] text-xs leading-4 text-black">
      <header className="flex h-[31px] shrink-0 items-center border-t border-[#aaa] bg-linear-to-r from-[#e8f5f9] via-[#eaf6f3] to-[#e9f3fa] pr-px pl-2">
        <Icon name="应用" className="size-[17px]" />
        <h1 className="ml-[5px] flex-1">无标题 - ArcMap</h1>
        <button aria-label="最小化" className="flex w-[46px] justify-center"><span className="h-px w-[10px] bg-black" /></button>
        <button aria-label="最大化" className="flex w-[46px] justify-center"><span className="size-[10px] rounded-xs border border-black" /></button>
        <button aria-label="关闭" className="flex w-[46px] justify-center"><svg viewBox="0 0 10 10" className="size-[10px]"><path d="M0 0l10 10M10 0L0 10" stroke="#000" /></svg></button>
      </header>
      <div className="flex h-[159px] shrink-0 flex-col bg-linear-to-r from-[#f0f0f0] to-[#f7f7f7]">
        <Bar><Tools items="线段 弧段 草图 w | 平行 垂直 | 完成草图 | 撤销" /></Bar>
        <nav className="flex h-[27px] shrink-0 items-center gap-[17px] pl-[13px]">
          {["文件(F)", "编辑(E)", "视图(V)", "书签(B)", "插入(I)", "选择(S)", "地理处理(G)", "自定义(C)", "窗口(W)", "帮助(H)"].map((m) => <button key={m}>{m}</button>)}
        </nav>
        <Bar>
          <Tools items="新建 打开 保存 打印 | 剪切 复制 粘贴 删除 | 撤销 恢复 | 添加数据 v |" />
          <div className="relative">
            <select aria-label="比例尺" className={combo + " block h-5 w-[148px] pl-[3px]"}><option>1:38,765,743</option></select>
            <svg viewBox="0 0 8 5" className="pointer-events-none absolute top-2 right-[4px] h-[5px] w-2"><path d="M.5.5L4 4 7.500.5" fill="none" stroke="#555" /></svg>
          </div>
          <Tools items="| *编辑器工具条 | 内容列表 目录窗口 搜索窗口 工具箱窗口 Python窗口 | 模型构建器" />
        </Bar>
        <Bar><Tools items="放大 缩小 平移 全图 | 固定比例放大 固定比例缩小 | 返回 前进 | 选择要素 v 清除选择 | 选择元素 | 识别 超链接 HTML弹出 | 测量 | 查找 查找路径 转到XY | 时间滑块 | 查看器" /></Bar>
        <Bar className="ml-[308px]">
          <Tools items="页面放大 页面缩小 页面平移 页面全图 实际大小 | 页面缩入 页面缩出 | 上一页面 下一页面" />
          <div className="relative">
            <select aria-label="页面比例" className={combo + " block h-5 w-[59px] pl-[2px] text-[#666]"}><option>46%</option></select>
            <svg viewBox="0 0 8 5" className="pointer-events-none absolute top-2 right-[4px] h-[5px] w-2"><path d="M.5.5L4 4 7.500.5" fill="none" stroke="#aaa" /></svg>
          </div>
          <Tools items="|" />
          <button aria-label="切换草稿" className="flex size-[22px] items-center justify-center border border-[#a9b4bd] bg-[#dce8f2]"><Icon name="切换草稿" /></button>
          <Tools items="焦点数据框 更改布局 数据驱动" />
        </Bar>
        <Bar className="ml-[456px]">
          <button className="flex w-[67px] items-center gap-[5px] pl-[4px]">编辑器(R)<Caret /></button>
          <Tools items="| 编辑工具 注记编辑 | 线段 弧段 草图 w 点 | 编辑折点 整形 裁剪面 分割 旋转 | 属性 草图属性 | 创建要素" />
        </Bar>
      </div>
      <main className="-mt-px flex min-h-0 flex-1 pl-px">
        <Contents />
        <div className="ml-[5px] flex min-w-0 flex-1"><MapPane /></div>
        <div className="ml-[6px] flex gap-[4px] pr-px"><Catalog /><Create /></div>
      </main>
      <footer className="flex h-[23px] shrink-0 items-center justify-end gap-2 pt-[3px] pr-[166px]"><span>90.509</span><span>52.084 十进制度</span></footer>
      <TableWindow />
    </div>
  );
}
